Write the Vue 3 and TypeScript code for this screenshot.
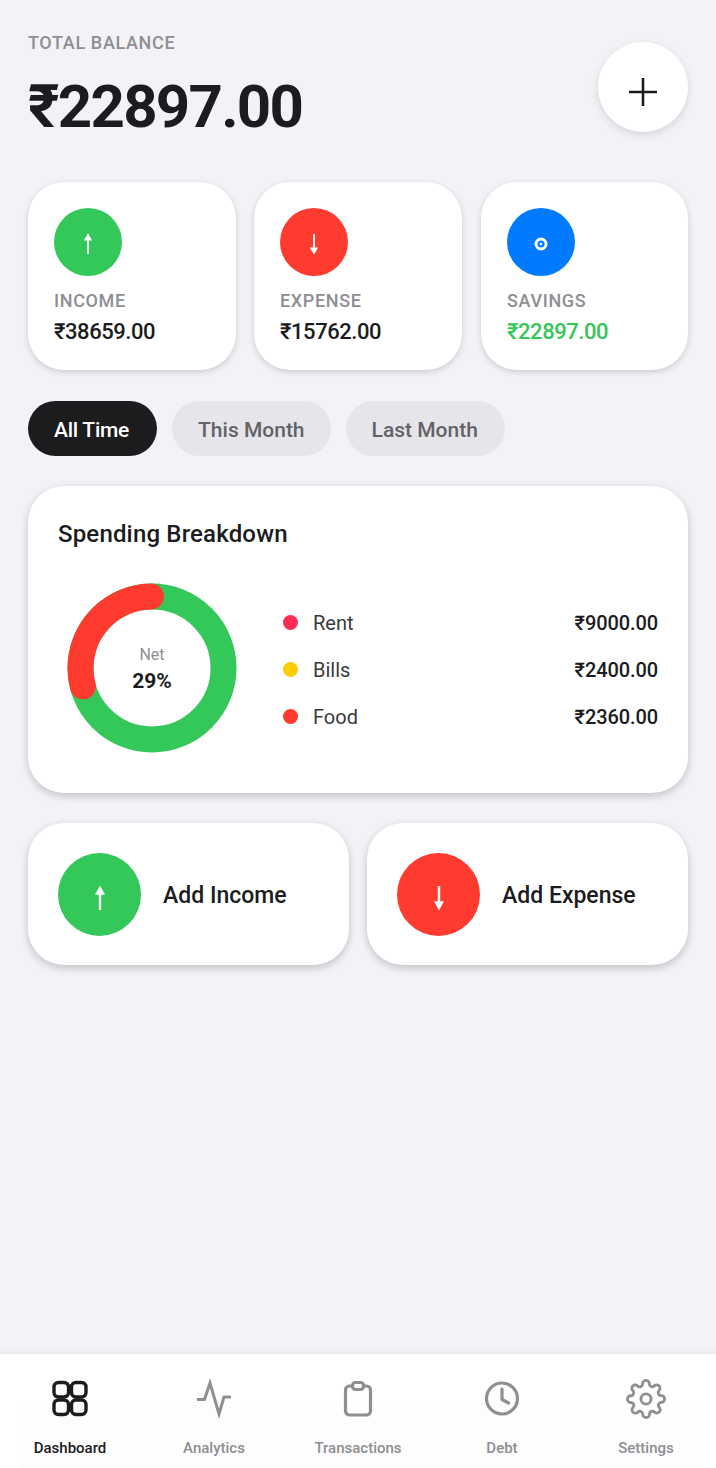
<template>
  <div class="screen">
    <header class="top">
      <div>
        <div class="top-label">TOTAL BALANCE</div>
        <div class="top-amount">₹22897.00</div>
      </div>
      <button class="add-btn" aria-label="Add">
        <svg width="32" height="32" viewBox="0 0 32 32"><path d="M16 2v28M2 16h28" stroke="#1c1c1e" stroke-width="2.6" fill="none" /></svg>
      </button>
    </header>

    <section class="stats">
      <div class="stat" v-for="s in stats" :key="s.label">
        <div class="stat-icon" :class="s.kind">
          <svg v-if="s.kind === 'up'" width="12" height="22" viewBox="0 0 12 22"><path d="M6 21V3M3.400 6.500 6 2l2.600 4.500z" stroke="#fff" stroke-width="1.800" fill="#fff" /></svg>
          <svg v-else-if="s.kind === 'down'" width="12" height="22" viewBox="0 0 12 22"><path d="M6 1v18M3.400 15.500 6 20l2.600-4.500z" stroke="#fff" stroke-width="1.800" fill="#fff" /></svg>
          <svg v-else width="14" height="14" viewBox="0 0 14 14"><circle cx="7" cy="7" r="5" stroke="#fff" stroke-width="3" fill="#007aff" /><circle cx="7" cy="7" r="1.500" fill="#cfe4ff" /></svg>
        </div>
        <div class="stat-label">{{ s.label }}</div>
        <div class="stat-value" :class="{ green: s.kind === 'save' }">{{ s.value }}</div>
      </div>
    </section>

    <nav class="chips">
      <span class="chip" v-for="(c, i) in chips" :key="c" :class="{ active: i === 0 }">{{ c }}</span>
    </nav>

    <section class="card breakdown">
      <h2 class="card-title">Spending Breakdown</h2>
      <div class="breakdown-body">
        <div class="donut">
          <svg width="170" height="170" viewBox="0 0 170 170">
            <circle cx="85" cy="85" r="71.500" fill="none" stroke="#34c759" stroke-width="26" />
            <path d="M84 13.500A71.500 71.500 0 0 0 15.930 103.500" fill="none" stroke="#ff3b30" stroke-width="26" stroke-linecap="round" />
          </svg>
          <div class="donut-text">
            <div class="donut-net">Net</div>
            <div class="donut-pct">29%</div>
          </div>
        </div>
        <ul class="legend">
          <li v-for="l in legend" :key="l.name">
            <i class="dot" :style="{ background: l.color }"></i>
            <span class="legend-name">{{ l.name }}</span>
            <span class="legend-amount">{{ l.amount }}</span>
          </li>
        </ul>
      </div>
    </section>

    <section class="actions">
      <div class="action">
        <div class="action-icon up">
          <svg width="14" height="26" viewBox="0 0 14 26"><path d="M7 25V4M4 8.500 7 3l3 5.500z" stroke="#fff" stroke-width="2.400" fill="#fff" /></svg>
        </div>
        <span>Add Income</span>
      </div>
      <div class="action">
        <div class="action-icon down">
          <svg width="14" height="26" viewBox="0 0 14 26"><path d="M7 1v21M4 17.500 7 23l3-5.500z" stroke="#fff" stroke-width="2.400" fill="#fff" /></svg>
        </div>
        <span>Add Expense</span>
      </div>
    </section>

    <footer class="tabbar">
      <div class="tabbar-inner"></div>
      <div class="tab active">
        <svg width="44" height="44" viewBox="0 0 44 44" fill="none" stroke="#1c1c1e" stroke-width="3.400">
          <rect x="6" y="5.500" width="14.500" height="14.500" rx="4.500" />
          <rect x="23.500" y="5.500" width="14.500" height="14.500" rx="4.500" />
          <rect x="6" y="23" width="14.500" height="14.500" rx="4.500" />
          <rect x="23.500" y="23" width="14.500" height="14.500" rx="4.500" />
        </svg>
        <span>Dashboard</span>
      </div>
      <div class="tab">
        <svg width="44" height="44" viewBox="0 0 44 44" fill="none" stroke="#8e8e93" stroke-width="3">
          <path d="M5 22.500h7.500L18 6l9 31 5-17h7" />
        </svg>
        <span>Analytics</span>
      </div>
      <div class="tab">
        <svg width="44" height="44" viewBox="0 0 44 44" fill="none" stroke="#8e8e93" stroke-width="3.200" stroke-linejoin="round">
          <rect x="9.500" y="9" width="25" height="29" rx="4" />
          <rect x="16.500" y="5.500" width="11" height="7" rx="3" fill="#fff" />
        </svg>
        <span>Transactions</span>
      </div>
      <div class="tab">
        <svg width="44" height="44" viewBox="0 0 44 44" fill="none" stroke="#8e8e93" stroke-width="3.200">
          <circle cx="22" cy="21.500" r="15.500" />
          <path d="M22 12v10.500l6.500 3.500" stroke-linecap="round" stroke-linejoin="round" />
        </svg>
        <span>Debt</span>
      </div>
      <div class="tab">
        <svg width="44" height="44" viewBox="-1 -1 26 26" fill="none" stroke="#8e8e93" stroke-width="1.650" stroke-linecap="round" stroke-linejoin="round">
          <circle cx="12" cy="12" r="3" />
          <path d="M19.400 15a1.650 1.650 0 0 0 .33 1.820l.06.06a2 2 0 1 1-2.830 2.830l-.06-.06a1.650 1.650 0 0 0-1.820-.33 1.650 1.650 0 0 0-1 1.510V21a2 2 0 0 1-4 0v-.09A1.650 1.650 0 0 0 9 19.400a1.650 1.650 0 0 0-1.820.33l-.06.06a2 2 0 1 1-2.830-2.830l.06-.06a1.650 1.650 0 0 0 .33-1.820 1.650 1.650 0 0 0-1.510-1H3a2 2 0 0 1 0-4h.09A1.650 1.650 0 0 0 4.600 9a1.650 1.650 0 0 0-.33-1.820l-.06-.06a2 2 0 1 1 2.830-2.830l.06.06a1.650 1.650 0 0 0 1.820.33H9a1.650 1.650 0 0 0 1-1.510V3a2 2 0 0 1 4 0v.09a1.650 1.650 0 0 0 1 1.510 1.650 1.650 0 0 0 1.820-.33l.06-.06a2 2 0 1 1 2.830 2.830l-.06.06a1.650 1.650 0 0 0-.33 1.820V9a1.650 1.650 0 0 0 1.510 1H21a2 2 0 0 1 0 4h-.09a1.650 1.650 0 0 0-1.510 1z" />
        </svg>
        <span>Settings</span>
      </div>
    </footer>
  </div>
</template>

<script setup lang="ts">
const stats = [
  { label: 'INCOME', value: '₹38659.00', kind: 'up' },
  { label: 'EXPENSE', value: '₹15762.00', kind: 'down' },
  { label: 'SAVINGS', value: '₹22897.00', kind: 'save' },
]

const chips = ['All Time', 'This Month', 'Last Month']

const legend = [
  { name: 'Rent', amount: '₹9000.00', color: '#ff2d55' },
  { name: 'Bills', amount: '₹2400.00', color: '#ffcc00' },
  { name: 'Food', amount: '₹2360.00', color: '#ff3b30' },
]
</script>

<style>
html, body { margin: 0; background: #f2f2f7; }
</style>

<style scoped>
.screen { width: 716px; height: 1468px; box-sizing: border-box; padding: 34px 28px 0; display: flex; flex-direction: column; font-family: Roboto, "Noto Sans", sans-serif; color: #1c1c1e; background: #f2f2f7; overflow: hidden; }

.top { display: flex; justify-content: space-between; align-items: flex-start; height: 148px; }
.top-label { font-size: 18px; line-height: 18px; font-weight: 500; letter-spacing: 0.65px; color: #8e8e93; }
.top-amount { font-size: 60px; line-height: 70px; font-weight: 700; letter-spacing: -1.75px; margin-top: 20px; }
.add-btn { width: 90px; height: 90px; margin-top: 8px; padding: 10px 0 0; border: 0; border-radius: 50%; background: #fff; display: flex; align-items: center; justify-content: center; box-shadow: 0 3px 8px rgba(0,0,0,.12); }

.stats { display: grid; grid-template-columns: repeat(3, 1fr); gap: 18px; }
.stat { height: 188px; box-sizing: border-box; padding: 26px; background: #fff; border-radius: 36px; box-shadow: 0 2px 6px rgba(0,0,0,.16); }
.stat:last-child { margin-left: 1px; }
.stat-icon { width: 68px; height: 68px; border-radius: 50%; display: flex; align-items: center; justify-content: center; padding-top: 3px; box-sizing: border-box; }
.up { background: #34c759; }
.down { background: #ff3b30; }
.save { background: #007aff; }
.stat-label { margin-top: 14px; font-size: 18px; line-height: 21px; font-weight: 500; letter-spacing: 0.65px; color: #8e8e93; }
.stat-value { margin-top: 8px; font-size: 22px; line-height: 26px; font-weight: 500; letter-spacing: -0.45px; }
.green { color: #34c759; }

.chips { display: flex; gap: 15px; margin-top: 31px; }
.chip { height: 55px; box-sizing: border-box; padding: 0 26px; border-radius: 28px; background: #e5e5ea; color: #636366; font-size: 21px; line-height: 59px; font-weight: 500; }
.chip:last-child { padding-right: 27px; }
.chip.active { background: #1c1c1e; color: #fff; letter-spacing: -0.25px; padding-right: 28px; }

.card { background: #fff; border-radius: 36px; box-shadow: 0 3px 8px rgba(0,0,0,.2); }
.breakdown { margin-top: 30px; height: 307px; box-sizing: border-box; padding: 33px 30px 0; }
.card-title { margin: 0; font-size: 24px; line-height: 30px; font-weight: 500; letter-spacing: 0.17px; }
.breakdown-body { display: flex; align-items: center; margin-top: 34px; padding-left: 9px; }
.donut { position: relative; width: 170px; height: 170px; flex: none; }
.donut svg { display: block; }
.donut-text { position: absolute; inset: 0; padding-top: 4px; display: flex; flex-direction: column; align-items: center; justify-content: center; }
.donut-net { font-size: 16px; line-height: 20px; color: #8e8e93; }
.donut-pct { font-size: 21px; line-height: 28px; font-weight: 700; margin-top: 2px; }
.legend { flex: 1; list-style: none; margin: 0; padding: 4px 0 0 46px; display: flex; flex-direction: column; gap: 19px; }
.legend li { display: flex; align-items: center; height: 28px; font-size: 20px; }
.dot { width: 15px; height: 15px; border-radius: 50%; margin: -2px 15px 0 0; }
.legend-name { color: #3a3a3c; }
.legend-amount { margin-left: auto; font-weight: 500; letter-spacing: -0.1px; }

.actions { display: grid; grid-template-columns: 1fr 1fr; gap: 18px; margin-top: 30px; }
.action { height: 142px; box-sizing: border-box; padding: 0 30px; display: flex; align-items: center; gap: 22px; background: #fff; border-radius: 36px; box-shadow: 0 3px 8px rgba(0,0,0,.2); font-size: 23px; font-weight: 500; }
.action span { padding-top: 2px; }
.action-icon { width: 83px; height: 83px; border-radius: 50%; display: flex; align-items: center; justify-content: center; padding-top: 8px; box-sizing: border-box; }

.tabbar { position: relative; margin: auto -28px 0; height: 114px; background: #fff; box-shadow: 0 -2px 6px rgba(0,0,0,.06); display: grid; grid-template-columns: repeat(5, 144px); justify-content: center; }
.tabbar-inner { position: absolute; left: 18px; right: 18px; top: 48px; bottom: 0; background: #fdfdfd; border-radius: 4px; }
.tab { position: relative; display: flex; flex-direction: column; align-items: center; padding-top: 23px; font-size: 15px; font-weight: 500; color: #8e8e93; }
.tab svg { display: block; }
.tab span { margin-top: 17px; line-height: 20px; }
.tab.active { color: #1c1c1e; }
</style>
